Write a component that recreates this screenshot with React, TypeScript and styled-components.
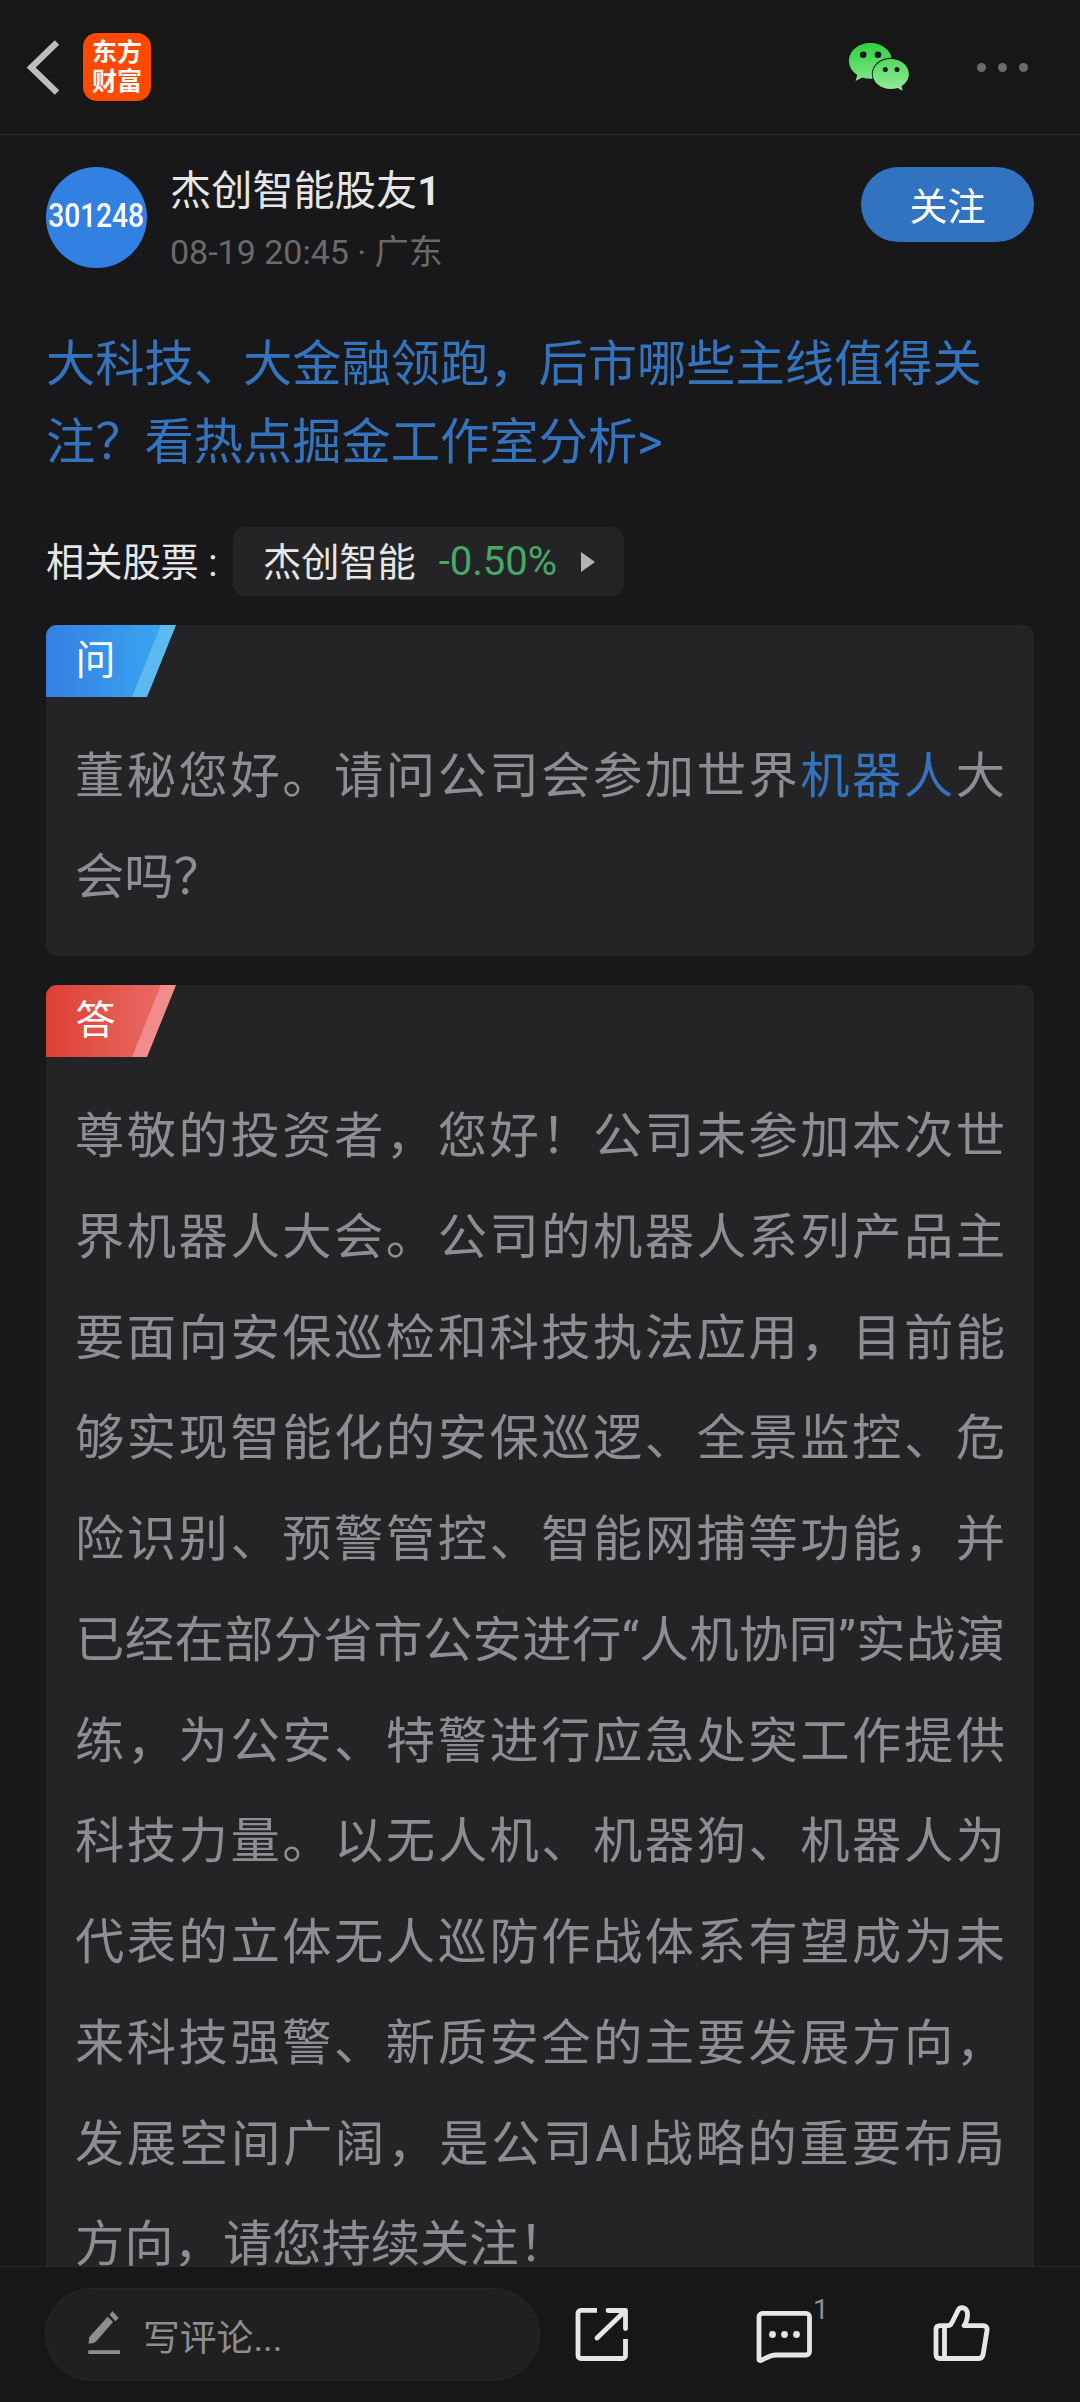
import React from "react";
import styled, { createGlobalStyle } from "styled-components";

const fontStack = `Roboto, "Noto Sans CJK SC", sans-serif`;

const GlobalStyle = createGlobalStyle`
  html, body { margin: 0; background: #18181a; }
  body { font-family: ${fontStack}; }
  * { box-sizing: border-box; }
`;

const Screen = styled.div`
  width: 1080px;
  height: 2402px;
  display: flex;
  flex-direction: column;
  overflow: hidden;
  background: #18181a;
`;

const Header = styled.header`
  flex: none;
  height: 135px;
  display: flex;
  align-items: center;
  padding: 0 52px 0 26px;
  background: #171717;
  border-bottom: 1px solid #29292b;
`;

const BackIcon = styled.svg`
  width: 34px;
  height: 56px;
`;

const Logo = styled.div`
  width: 68px;
  height: 68px;
  margin-left: 23px;
  border-radius: 14px;
  background: #ff4800;
  color: #fff;
  display: flex;
  flex-direction: column;
  align-items: center;
  justify-content: center;
  padding-bottom: 4px;
  font-family: "Noto Sans CJK SC", sans-serif;
  font-weight: 700;
  font-size: 25px;
  line-height: 29px;
`;

const WechatIcon = styled.svg`
  width: 62px;
  height: 50px;
  margin-left: auto;
`;

const MoreDots = styled.div`
  display: flex;
  gap: 12px;
  margin-left: 67px;
`;

const Dot = styled.span`
  width: 9px;
  height: 9px;
  border-radius: 50%;
  background: #6c6c6c;
`;

const Content = styled.main`
  flex: 1;
  min-height: 0;
  overflow: hidden;
  padding: 32px 46px 0;
`;

const Author = styled.section`
  display: flex;
  align-items: flex-start;
  height: 101px;
`;

const Avatar = styled.div`
  width: 101px;
  height: 101px;
  border-radius: 50%;
  background: #3380e3;
  color: #fff;
  display: flex;
  align-items: center;
  justify-content: center;
  padding-bottom: 5px;
  font-family: Roboto, sans-serif;
  font-size: 33.5px;
  font-weight: 500;
`;

const StockCode = styled.span`
  transform: scaleX(0.84);
`;

const AuthorText = styled.div`
  margin-left: 23px;
  display: flex;
  flex-direction: column;
`;

const Name = styled.div`
  font-size: 41.2px;
  line-height: 48px;
  color: #e6e6e6;
`;

const NameDigit = styled.span`
  font-weight: 600;
`;

const Meta = styled.div`
  margin-top: 13px;
  font-size: 34px;
  line-height: 48px;
  color: #6a6a6a;
`;

const FollowButton = styled.button`
  margin-left: auto;
  width: 173px;
  height: 75px;
  border: 0;
  border-radius: 38px;
  padding: 0 0 3px;
  background: #3173c1;
  color: #fff;
  font-family: ${fontStack};
  font-size: 38px;
`;

const PromoLink = styled.a`
  display: block;
  margin-top: 57px;
  font-size: 49.25px;
  line-height: 78px;
  color: #3474bf;
`;

const StockRow = styled.div`
  display: flex;
  align-items: center;
  margin-top: 46px;
  height: 69px;
  font-size: 38.2px;
  color: #e6e6e6;
`;

const StockLabel = styled.span`
  width: 187px;
  padding-bottom: 5px;
  white-space: nowrap;
`;

const StockChip = styled.div`
  display: flex;
  align-items: center;
  height: 69px;
  width: 391px;
  padding-left: 30px;
  border-radius: 12px;
  background: #242426;
`;

const StockName = styled.span`
  padding-bottom: 5px;
`;

const Change = styled.span`
  margin-left: 23px;
  font-size: 40px;
  color: #48a868;
`;

const Triangle = styled.span`
  margin-left: 24px;
  border-style: solid;
  border-width: 10px 0 10px 14px;
  border-color: transparent transparent transparent #b3b3b3;
`;

const Card = styled.section`
  margin-top: 29px;
  border-radius: 11px;
  background: #242426;
  overflow: hidden;
  padding-bottom: 28.5px;
`;

const Badge = styled.div<{ $from: string; $to: string; $edge: string }>`
  display: grid;
  width: 130px;
  height: 72px;
  clip-path: polygon(0 0, 100% 0, 101px 100%, 0 100%);
  background: linear-gradient(90deg, ${(p) => p.$from}, ${(p) => p.$to});

  &::before {
    content: "";
    grid-area: 1 / 1;
    background: ${(p) => p.$edge};
    clip-path: polygon(115px 0, 100% 0, 101px 100%, 86px 100%);
  }
`;

const BadgeText = styled.span`
  grid-area: 1 / 1;
  padding-left: 29.5px;
  font-size: 40px;
  line-height: 72px;
  color: #fff;
`;

const Paragraph = styled.p`
  margin: 29px 29px 0;
  font-size: 49.3px;
  line-height: 100.75px;
  text-align: justify;
  color: #8e8d92;
`;

const Keyword = styled.a`
  color: #3474bf;
`;

const BottomBar = styled.footer`
  flex: none;
  height: 136px;
  display: flex;
  align-items: flex-start;
  border-top: 1px solid #29292b;
  background: #171717;
  padding: 21px 0 0 45px;
`;

const CommentInput = styled.div`
  width: 495px;
  height: 93px;
  border-radius: 47px;
  border: 1px solid #272727;
  background: #202020;
  display: flex;
  align-items: center;
  padding-left: 41px;
  font-size: 36.8px;
  color: #8e8d92;
`;

const PencilIcon = styled.svg`
  width: 34px;
  height: 44px;
  margin: -3px 22px 0 0;
`;

const Action = styled.div<{ $left: number }>`
  position: relative;
  width: 60px;
  height: 60px;
  margin: 15px 0 0 ${(p) => p.$left}px;
`;

const ActionIcon = styled.svg`
  display: block;
  width: 60px;
  height: 60px;
  fill: none;
  stroke: #e6e6e6;
  stroke-width: 4.8;
  stroke-linejoin: round;
  stroke-linecap: butt;
`;

const Count = styled.span`
  position: absolute;
  left: 60px;
  top: -10px;
  font-size: 28px;
  line-height: 33px;
  color: #8e8d92;
`;

export default function App() {
  return (
    <Screen>
      <GlobalStyle />
      <Header>
        <BackIcon viewBox="0 0 34 56" fill="none" stroke="#bdbdbd" strokeWidth="6.300">
          <path d="M31 3.500 5.200 28.500 31 53.500" />
        </BackIcon>
        <Logo>
          <span>东方</span>
          <span>财富</span>
        </Logo>
        <WechatIcon viewBox="0 0 62 50">
          <defs>
            <linearGradient id="wx" x1="0" y1="0" x2="0" y2="50" gradientUnits="userSpaceOnUse">
              <stop offset="0" stopColor="#2bd03c" />
              <stop offset="1" stopColor="#98ec9d" />
            </linearGradient>
          </defs>
          <path fill="url(#wx)" d="M22.500 1C10.300 1 1 8.800 1 19c0 5.800 3.200 10.600 8.300 13.900L7.500 39l6.800-3.500c2.600.8 5.300 1.200 8.200 1.200 12 0 21.500-7.900 21.500-17.700S34.500 1 22.500 1Z" />
          <ellipse cx="42.800" cy="31.800" rx="19" ry="16" fill="#171717" />
          <path fill="url(#wx)" d="M42.800 17c-10.100 0-18.100 6.700-18.100 15s8 15 18.100 15c2.400 0 4.700-.3 6.800-1l5 2.700-1.100-4.700c4.500-2.800 7.400-7.100 7.400-12 0-8.300-8-15-18.100-15Z" />
          <g fill="#171717">
            <circle cx="15.200" cy="12.800" r="3.300" />
            <circle cx="30" cy="12.800" r="3.300" />
            <circle cx="37.300" cy="27.500" r="2.500" />
            <circle cx="49" cy="27.500" r="2.500" />
          </g>
        </WechatIcon>
        <MoreDots>
          <Dot />
          <Dot />
          <Dot />
        </MoreDots>
      </Header>

      <Content>
        <Author>
          <Avatar>
            <StockCode>301248</StockCode>
          </Avatar>
          <AuthorText>
            <Name>
              杰创智能股友<NameDigit>1</NameDigit>
            </Name>
            <Meta>08-19 20:45 · 广东</Meta>
          </AuthorText>
          <FollowButton>关注</FollowButton>
        </Author>

        <PromoLink>大科技、大金融领跑，后市哪些主线值得关注？看热点掘金工作室分析&gt;</PromoLink>

        <StockRow>
          <StockLabel>相关股票 :</StockLabel>
          <StockChip>
            <StockName>杰创智能</StockName>
            <Change>-0.50%</Change>
            <Triangle />
          </StockChip>
        </StockRow>

        <Card>
          <Badge $from="#347fe4" $to="#3aaaf0" $edge="#5cbaf0">
            <BadgeText>问</BadgeText>
          </Badge>
          <Paragraph>
            董秘您好。请问公司会参加世界<Keyword>机器人</Keyword>大会吗？
          </Paragraph>
        </Card>

        <Card>
          <Badge $from="#de4033" $to="#e8706a" $edge="#f28b8c">
            <BadgeText>答</BadgeText>
          </Badge>
          <Paragraph>
            尊敬的投资者，您好！公司未参加本次世界机器人大会。公司的机器人系列产品主要面向安保巡检和科技执法应用，目前能够实现智能化的安保巡逻、全景监控、危险识别、预警管控、智能网捕等功能，并已经在部分省市公安进行“人机协同”实战演练，为公安、特警进行应急处突工作提供科技力量。以无人机、机器狗、机器人为代表的立体无人巡防作战体系有望成为未来科技强警、新质安全的主要发展方向，发展空间广阔，是公司AI战略的重要布局方向，请您持续关注！
          </Paragraph>
        </Card>
      </Content>

      <BottomBar>
        <CommentInput>
          <PencilIcon viewBox="0 0 34 44" fill="#8e8d92">
            <path d="M2.300 26 20.700 5.700 26 11 9 30.500 6 32.200 1.500 32.600Z" />
            <path d="M25.300 0 31.700 7 28.300 10.300 22.700 3.700Z" />
            <path d="M1.300 39.200h31.700v3.800H1.300z" />
          </PencilIcon>
          <span>写评论...</span>
        </CommentInput>
        <Action $left={32}>
          <ActionIcon viewBox="0 0 60 60">
            <path d="M25 7.300H9a3 3 0 0 0-3 3V52.500a3 3 0 0 0 3 3H50.500a3 3 0 0 0 3-3V36" />
            <path strokeLinecap="round" d="M36 7.500H53.500V25.500M53 8 25 35" />
          </ActionIcon>
        </Action>
        <Action $left={121}>
          <ActionIcon viewBox="0 0 60 60">
            <path d="M9.500 10.300H53a3.500 3.500 0 0 1 3.500 3.500V48.500a3.500 3.500 0 0 1-3.500 3.500H23C15.500 52 10 57.500 7 57.500 6.300 57.500 6 57 6 56.500V13.800a3.500 3.500 0 0 1 3.500-3.500Z" />
            <g fill="#e6e6e6" stroke="none">
              <circle cx="19.500" cy="31.500" r="3.400" />
              <circle cx="31.500" cy="31.500" r="3.400" />
              <circle cx="43.500" cy="31.500" r="3.400" />
            </g>
          </ActionIcon>
          <Count>1</Count>
        </Action>
        <Action $left={119}>
          <ActionIcon viewBox="0 0 60 60">
            <path d="M8 22.700H16Q18.500 22.700 20 19.500L26 7.500C28 3.500 35 3.500 35.500 11Q35.500 18 32 22.700H51Q55.500 22.700 55 27.500L51 52Q50 55.500 46.500 55.500H8Q4 55.500 4 51.500V26.700Q4 22.700 8 22.700ZM12.500 22.700V55.500" />
          </ActionIcon>
        </Action>
      </BottomBar>
    </Screen>
  );
}
